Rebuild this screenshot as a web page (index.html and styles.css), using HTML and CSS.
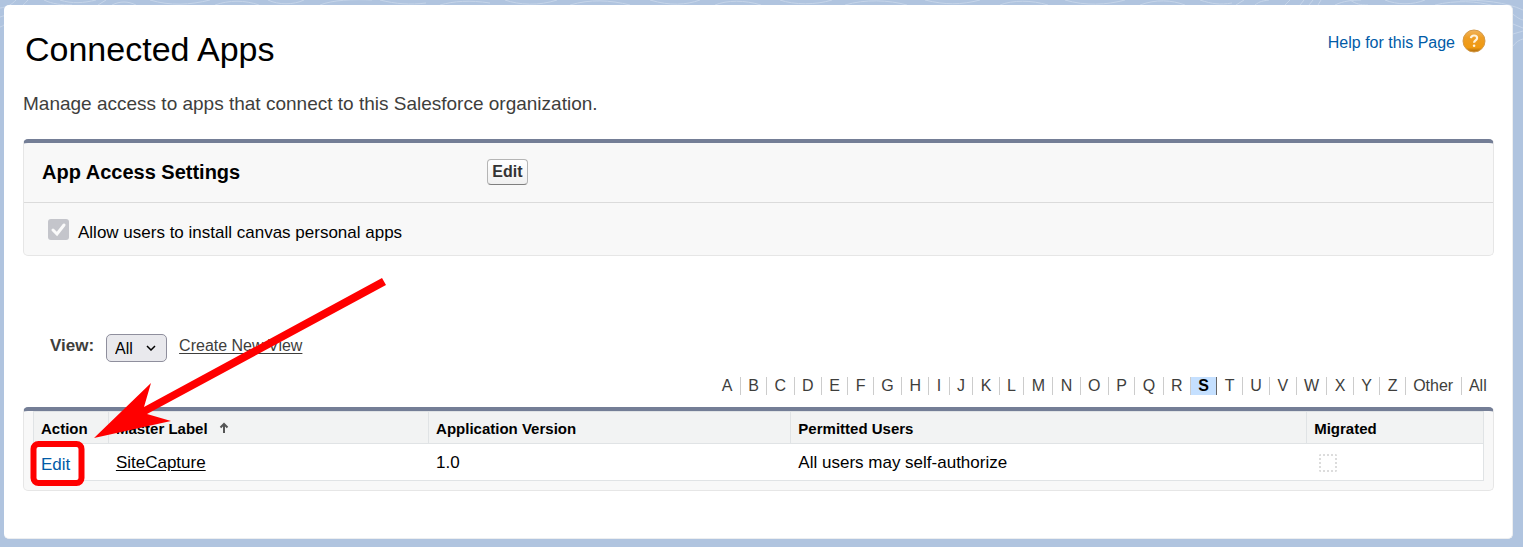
FILE: index.html
```
<!DOCTYPE html>
<html lang="en">
<head>
  <meta charset="UTF-8">
  <meta name="viewport" content="width=device-width, initial-scale=1.0">
  <title>Connected Apps</title>
  <link rel="stylesheet" href="styles.css">
</head>
<body>
  <!-- Contour lines behind the card -->
  <svg class="contours" viewBox="0 0 1523 547" preserveAspectRatio="xMidYMin slice" aria-hidden="true">
    <path d="M0 8c8-1 12-4 16-8M0 17c14-4 22-10 28-17M0 27c4-1 6-4 9-8M44 0c8 4 18 5 28 5M60 0c12 4 24 3 36 0M98 5l8-5M112 5c8-4 16-4 24 0M150 0c20 6 40 5 60 0M215 5c14-5 30-5 44 0M268 0c10 5 26 5 36 0M320 5c12-5 34-6 52-5M380 0c16 4 30 5 46 3M440 5c14-4 30-5 50-2M505 0c14 5 34 6 52 0M570 5c20-6 40-5 60 0M650 0c20 6 36 5 50 0M715 5c12-5 30-5 46 0M780 0c14 5 36 5 52 0M845 5c20-6 44-5 62 0M925 0c20 5 36 5 55 0M1000 5c12-5 32-5 48 0M1065 0c20 6 42 5 60 0M1140 5c16-6 32-5 45 0M1200 0c12 4 20 5 32 3M1236 5l8-5M1255 5c5-4 8-4 14-5M1285 5l5-5M1300 5l4-5M1309 5l4-5M1318 5l3-5M1335 5c8-4 18-5 26-5M1350 0c6 4 10 5 18 5M1385 0c12 5 28 5 40 0M1435 5c20-5 42-4 60 1s20 12 28 14M1460 0c22 0 46 2 63 10M1513 24l10 4M1513 34l10-3M1513 46c3-4 6-6 10-7"/>
  </svg>

  <main class="card">
    <header class="page-header">
      <h1>Connected Apps</h1>
      <a class="help-link" href="#">
        <span>Help for this Page</span>
        <svg class="help-icon" viewBox="0 0 24 24" aria-hidden="true">
          <defs>
            <linearGradient id="orange" x1="0" y1="0" x2="0" y2="1">
              <stop offset="0" stop-color="#f0b45c"/>
              <stop offset="0.35" stop-color="#ee9d24"/>
              <stop offset="0.8" stop-color="#f09a10"/>
              <stop offset="1" stop-color="#a8690f"/>
            </linearGradient>
          </defs>
          <circle cx="12" cy="12" r="11" fill="url(#orange)" stroke="#d59a48"/>
          <path d="M8.900 9.200c.2-1.900 1.400-2.700 3.100-2.700s3.100.9 3.100 2.500c0 2.300-3 2.500-3 4.700" fill="none" stroke="#fff3dc" stroke-width="2.200"/>
          <circle cx="12.100" cy="16.700" r="1.300" fill="#fff3dc"/>
        </svg>
      </a>
    </header>
    <p class="intro">Manage access to apps that connect to this Salesforce organization.</p>

    <section class="panel">
      <div class="panel-header">
        <h2>App Access Settings</h2>
        <button class="btn" type="button">Edit</button>
      </div>
      <div class="panel-body">
        <input class="setting-check" type="checkbox" id="canvas-apps" checked disabled>
        <label for="canvas-apps">Allow users to install canvas personal apps</label>
      </div>
    </section>

    <div class="view-bar">
      <label for="view-select">View:</label>
      <span class="select-wrap">
        <select id="view-select">
          <option>All</option>
        </select>
        <svg class="chevron" viewBox="0 0 10 6" aria-hidden="true"><path d="M1 1l4 4 4-4"/></svg>
      </span>
      <a href="#">Create New View</a>
    </div>

    <nav class="rolodex">
      <a href="#">A</a>
      <a href="#">B</a>
      <a href="#">C</a>
      <a href="#">D</a>
      <a href="#">E</a>
      <a href="#">F</a>
      <a href="#">G</a>
      <a href="#">H</a>
      <a href="#">I</a>
      <a href="#">J</a>
      <a href="#">K</a>
      <a href="#">L</a>
      <a href="#">M</a>
      <a href="#">N</a>
      <a href="#">O</a>
      <a href="#">P</a>
      <a href="#">Q</a>
      <a href="#">R</a>
      <a href="#" class="selected">S</a>
      <a href="#">T</a>
      <a href="#">U</a>
      <a href="#">V</a>
      <a href="#">W</a>
      <a href="#">X</a>
      <a href="#">Y</a>
      <a href="#">Z</a>
      <a href="#">Other</a>
      <a href="#">All</a>
    </nav>

    <section class="panel list">
      <table>
        <thead>
          <tr>
            <th class="col-action">Action</th>
            <th class="col-label">Master Label
              <svg class="sort-icon" viewBox="0 0 10 12" aria-hidden="true"><path d="M5 11V2M1.500 5.500L5 2l3.500 3.500"/></svg>
            </th>
            <th class="col-version">Application Version</th>
            <th class="col-users">Permitted Users</th>
            <th class="col-migrated">Migrated</th>
          </tr>
        </thead>
        <tbody>
          <tr>
            <td class="action"><a href="#">Edit</a></td>
            <td><a class="record-link" href="#">SiteCapture</a></td>
            <td>1.0</td>
            <td>All users may self-authorize</td>
            <td><input class="migrated-check" type="checkbox" aria-label="Migrated" disabled></td>
          </tr>
        </tbody>
      </table>
    </section>
  </main>

  <!-- Arrow and box pointing at the Edit action -->
  <svg class="callout" width="400" height="500" viewBox="0 0 400 500" aria-hidden="true">
    <path d="M382 278L144 407L151 383L94 438L171 421L147 414L386 285Z" fill="#f00"/>
    <rect x="33.500" y="444" width="48" height="39" rx="5" fill="none" stroke="#f00" stroke-width="6"/>
  </svg>
</body>
</html>
```
FILE: styles.css
```
:root {
  --page-bg: #b0c4df;
  --bar-color: #747e96;
  --panel-bg: #f8f8f8;
  --border-color: #e0e3e5;
  --link-color: #015ba7;
  --text-color: #3e3e3c;
}

* {
  margin: 0;
  padding: 0;
  box-sizing: border-box;
}

body {
  position: relative;
  padding: 5px 10px 8px 4px;
  background-color: var(--page-bg);
  color: #000;
  font-family: "Liberation Sans", Arial, sans-serif;
  font-size: 17px;
  line-height: 20px;
}

a {
  color: inherit;
}

.contours {
  position: absolute;
  top: 0;
  left: 0;
  width: 100%;
  fill: none;
  stroke: #c6d5e9;
  stroke-width: 1;
}

.card {
  position: relative;
  padding: 20px 18px 47px 19px;
  background: #fff;
  border: 1px solid #eceef0;
  border-width: 0 1px 1px 0;
  border-radius: 5px;
}

.page-header {
  display: flex;
  justify-content: space-between;
  align-items: flex-start;
  padding: 0 8px 0 2px;
}

h1 {
  font-size: 34px;
  font-weight: normal;
  line-height: 48px;
}

.help-link {
  display: flex;
  align-items: flex-start;
  gap: 7px;
  padding-top: 4px;
  color: var(--link-color);
  font-size: 16px;
  line-height: 28px;
  text-decoration: none;
}

.help-icon {
  width: 24px;
  height: 24px;
}

.intro {
  margin: 20px 0 25px;
  color: var(--text-color);
  font-size: 19px;
  line-height: 21px;
}

.panel {
  background: var(--panel-bg);
  border: 1px solid #e6e6e6;
  border-top: 4px solid var(--bar-color);
  border-radius: 5px;
}

.panel-header {
  display: grid;
  grid-template-columns: 30% auto;
  justify-content: start;
  align-items: center;
  column-gap: 10px;
  height: 60px;
  padding: 0 0 2px 18px;
  border-bottom: 1px solid #dbdbdb;
}

h2 {
  font-size: 20px;
  line-height: 24px;
}

.btn {
  height: 26px;
  padding: 0 4px;
  background: linear-gradient(#fff, #f0f0f0);
  border: 1px solid #b5b5b5;
  border-bottom-color: #7f7f7f;
  border-radius: 4px;
  color: #333;
  font: bold 16px "Liberation Sans", Arial, sans-serif;
}

.panel-body {
  display: flex;
  align-items: flex-start;
  gap: 9px;
  padding: 16px 24px 13px;
}

.panel-body label {
  padding-top: 5px;
  line-height: 18px;
}

.setting-check {
  width: 21px;
  height: 21px;
  appearance: none;
  border-radius: 3px;
  background: #c4c5cb url("data:image/svg+xml,%3Csvg xmlns='http://www.w3.org/2000/svg' viewBox='0 0 21 21'%3E%3Cpath d='M5 11l4 4 7-9' fill='none' stroke='%23fafafa' stroke-width='3' stroke-linecap='round'/%3E%3C/svg%3E");
}

.view-bar {
  display: flex;
  align-items: flex-start;
  gap: 12px;
  margin-top: 78px;
  padding-left: 27px;
  color: var(--text-color);
  line-height: 24px;
}

.view-bar label {
  font-weight: bold;
}

.view-bar a {
  font-size: 16px;
  text-underline-offset: 2px;
}

.select-wrap {
  position: relative;
  display: flex;
}

.view-bar select {
  width: 61px;
  height: 28px;
  padding: 0 8px;
  appearance: none;
  background: #e9e9ed;
  border: 1px solid #8f8f9d;
  border-radius: 5px;
  color: #000;
  font: 16px "Liberation Sans", Arial, sans-serif;
}

.chevron {
  position: absolute;
  top: 11px;
  right: 11px;
  width: 10px;
  height: 6px;
  fill: none;
  stroke: #000;
  stroke-width: 1.5;
  pointer-events: none;
}

.rolodex {
  display: flex;
  width: 53%;
  margin: 15px 0 12px auto;
  color: var(--text-color);
  font-size: 16px;
  line-height: 18px;
}

.rolodex a {
  flex: 1 1 auto;
  padding: 0 7px;
  border-right: 1px solid #ccc;
  text-align: center;
  text-decoration: none;
}

.rolodex a:last-child {
  border-right: none;
}

.rolodex .selected {
  background: #c5e0ff;
  border-right-color: #666;
  color: #000;
  font-weight: bold;
}

.list {
  padding: 0 9px 9px;
}

table {
  width: 100%;
  table-layout: fixed;
  border: 1px solid var(--border-color);
  border-spacing: 0;
  background: #fff;
}

th,
td {
  padding: 2px 0 0 7px;
  text-align: left;
}

th {
  height: 32px;
  background: #f2f3f3;
  border-bottom: 1px solid var(--border-color);
  font-size: 15px;
}

th + th {
  border-left: 1px solid var(--border-color);
}

td {
  height: 36px;
}

td + td {
  padding-left: 8px;
}

.col-action {
  width: 5.1%;
}

.col-label {
  width: 22.1%;
}

.col-version {
  width: 25%;
}

.col-users {
  width: 35.6%;
}

.sort-icon {
  width: 10px;
  height: 12px;
  margin-left: 7px;
  fill: none;
  stroke: #555;
  stroke-width: 2;
}

td.action {
  padding-top: 5px;
}

.action a {
  color: var(--link-color);
  text-decoration: none;
}

.record-link {
  text-underline-offset: 2px;
}

.migrated-check {
  display: block;
  width: 18px;
  height: 18px;
  margin-left: 5px;
  appearance: none;
  border: 2px dotted #dcdcdc;
  border-radius: 2px;
}

.callout {
  position: absolute;
  top: 0;
  left: 0;
  pointer-events: none;
}
```
